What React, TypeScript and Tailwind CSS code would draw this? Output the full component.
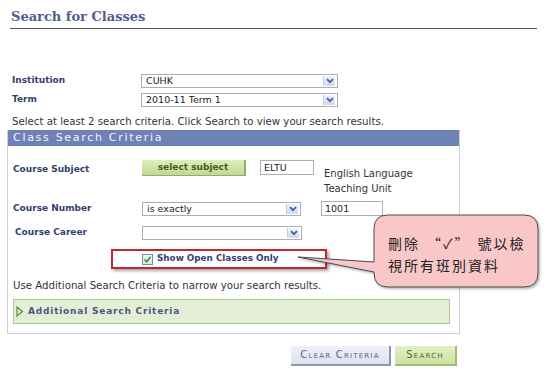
import React from "react";

function Arrow() {
  return (
    <span className="absolute right-[2px] top-[1px] bottom-[1px] w-[12px] bg-gradient-to-b from-[#eef2f9] to-[#cfdaec] border-l border-[#c3cde0] flex items-center justify-center">
      <svg width="8" height="6" viewBox="0 0 8 6">
        <path d="M1 1.2 L4 4.2 L7 1.2" fill="none" stroke="#3e62a8" strokeWidth="1.8" />
      </svg>
    </span>
  );
}

function Select(p: { value?: string; className?: string }) {
  return (
    <div className={`relative h-[14px] bg-white border border-[#a9afb9] text-[9.5px] leading-[12px] pl-[4px] text-[#222] ${p.className || ""}`}>
      {p.value}
      <Arrow />
    </div>
  );
}

function TextBox(p: { value: string; className?: string }) {
  return <div className={`h-[15px] bg-white border border-[#a9afb9] text-[9.5px] leading-[13px] pl-[3px] text-[#222] ${p.className || ""}`}>{p.value}</div>;
}

export default function App() {
  const label = "text-[9px] font-bold text-[#33416b]";
  return (
    <div className="relative w-[547px] h-[385px] bg-white overflow-hidden font-['DejaVu_Sans',sans-serif]">
      <div className="mx-[10px] mt-[8px] border-b border-[#5a5a5a] pb-[3px]">
        <h1 className="font-['DejaVu_Serif',serif] font-bold text-[13px] leading-[17px] text-[#4e5e88] pl-[1px]">Search for Classes</h1>
      </div>

      <div className="mt-[45px] px-[12px]">
        <div className="flex items-center h-[14px]">
          <div className={`w-[129px] ${label}`}>Institution</div>
          <Select value="CUHK" className="w-[197px]" />
        </div>
        <div className="flex items-center h-[14px] mt-[5px]">
          <div className={`w-[129px] ${label}`}>Term</div>
          <Select value="2010-11 Term 1" className="w-[197px]" />
        </div>
        <p className="mt-[9px] text-[10.2px] leading-[12px] text-[#333]">Select at least 2 search criteria. Click Search to view your search results.</p>
      </div>

      <div className="ml-[7px] w-[453px] mt-[2px] border border-t-0 border-[#c9ced8] pb-[9px]">
        <div className="h-[16px] bg-[#6f82b6] text-[#f2f4fa] text-[11px] leading-[16px] tracking-[1.7px] pl-[5px]">Class Search Criteria</div>

        <div className="flex items-start mt-[14px] pl-[5px] h-[36px]">
          <div className={`w-[129px] pt-[3px] ${label}`}>Course Subject</div>
          <div className="w-[104px] h-[16px] bg-gradient-to-b from-[#dfedbd] to-[#bfd98f] border-r-2 border-b border-[#93ad66] text-[9px] font-bold text-[#3f5d22] text-center leading-[15px]">select subject</div>
          <TextBox value="ELTU" className="ml-[14px] w-[54px]" />
          <div className="ml-[10px] mt-[6px] text-[10px] leading-[15px] text-[#333]">
            <div>English Language</div>
            <div>Teaching Unit</div>
          </div>
        </div>

        <div className="flex items-center mt-[5px] pl-[5px] h-[15px]">
          <div className={`w-[129px] ${label}`}>Course Number</div>
          <Select value="is exactly" className="w-[159px]" />
          <TextBox value="1001" className="ml-[20px] w-[62px] h-[14px] leading-[12px]" />
        </div>

        <div className="flex items-center mt-[9px] pl-[5px] h-[15px]">
          <div className={`w-[129px] pl-[2px] ${label}`}>Course Career</div>
          <Select className="w-[160px]" />
        </div>

        <div className="ml-[103px] mt-[9px] w-[216px] h-[20px] border-2 border-[#c1272d] shadow-[2px_2px_3px_rgba(0,0,0,0.35)] flex items-center pl-[29px]">
          <div className="w-[11px] h-[11px] border border-[#7a8aa8] bg-gradient-to-b from-[#f4f6fa] to-[#dfe5ee] flex items-center justify-center">
            <svg width="9" height="9" viewBox="0 0 9 9">
              <path d="M1.5 4.5 L3.6 6.8 L7.6 1.8" fill="none" stroke="#2d9a2d" strokeWidth="1.7" />
            </svg>
          </div>
          <span className="ml-[4px] text-[8.8px] font-bold text-[#33416b]">Show Open Classes Only</span>
        </div>

        <p className="mt-[11px] pl-[5px] text-[10.2px] leading-[12px] text-[#333]">Use Additional Search Criteria to narrow your search results.</p>

        <div className="ml-[5px] mt-[7px] w-[437px] h-[25px] bg-[#e4eed7] border border-[#aacb8e] flex items-center pl-[2px]">
          <svg width="8" height="11" viewBox="0 0 8 11">
            <path d="M1 1 L6.5 5.5 L1 10 Z" fill="none" stroke="#5d8c3c" strokeWidth="1.2" />
          </svg>
          <span className="ml-[4px] text-[9px] font-bold tracking-[0.8px] text-[#4a5780]">Additional Search Criteria</span>
        </div>
      </div>

      <div className="flex justify-end w-[457px] mt-[12px] gap-[4px]">
        <div className="w-[100px] h-[20px] bg-gradient-to-b from-[#eef1f7] to-[#dde2ee] border-r-2 border-b-2 border-[#8a93bb] text-[10px] [font-variant:small-caps] tracking-[1.2px] text-[#56628e] text-center leading-[18px]">Clear Criteria</div>
        <div className="w-[62px] h-[20px] bg-gradient-to-b from-[#e2eec6] to-[#cde3a3] border-r-2 border-b-2 border-[#9fbf6c] text-[10px] [font-variant:small-caps] tracking-[1.2px] text-[#4b6a2c] text-center leading-[18px]">Search</div>
      </div>

      <svg className="absolute inset-0 pointer-events-none" width="547" height="385" viewBox="0 0 547 385">
        <defs>
          <filter id="sh" x="-10%" y="-10%" width="130%" height="130%">
            <feDropShadow dx="1.5" dy="1.5" stdDeviation="1.2" floodColor="#000" floodOpacity="0.3" />
          </filter>
        </defs>
        <path
          d="M388 215 H524 Q538 215 538 229 V273 Q538 287 524 287 H388 Q374 287 374 273 V272 L298 257 L374 262 V229 Q374 215 388 215 Z"
          fill="#f9c7c8"
          stroke="#4a4a4a"
          strokeWidth="1"
          filter="url(#sh)"
        />
      </svg>
      <div className="absolute left-[388px] top-[232px] text-[14px] leading-[22px] tracking-[2px] text-[#222] font-['Noto_Sans_CJK_TC',sans-serif]">
        <div>
          刪除<span className="mx-[7px]">“✓”</span>號以檢
        </div>
        <div>視所有班別資料</div>
      </div>
    </div>
  );
}
